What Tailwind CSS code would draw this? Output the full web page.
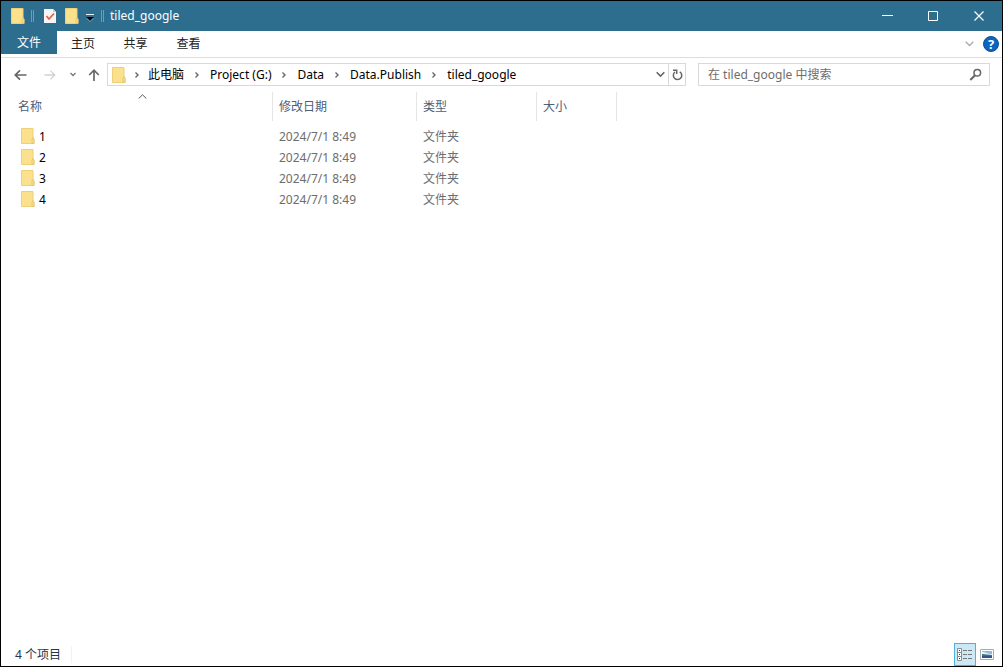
<!DOCTYPE html>
<html lang="zh-CN">
<head>
<meta charset="utf-8">
<title>tiled_google</title>
<script src="https://cdn.jsdelivr.net/npm/@tailwindcss/browser@4"></script>
</head>
<body class="flex h-screen flex-col overflow-hidden border border-black bg-white font-['Noto_Sans','Noto_Sans_CJK_SC',sans-serif] text-[12px] leading-4 text-black">
<svg class="hidden" aria-hidden="true">
  <symbol id="folder" viewBox="0 0 14 16">
    <path d="M.5.5h11.500v10l1 1v4H.5z" fill="#fce18c" stroke="#ecd07a"/>
    <path d="M11 15.500v-4.500l1-1.500 1 1.500v4.500z" fill="#fbe396" stroke="#dfc064" stroke-width=".8"/>
  </symbol>
  <symbol id="crumb" viewBox="0 0 6 8"><path d="M1.500 1.500L4 4 1.500 6.500" fill="none" stroke="#666" stroke-width="1.400"/></symbol>
</svg>

<header class="flex h-[30px] shrink-0 items-center bg-[#2d6e8f] text-white">
  <svg class="ml-[10px] h-4 w-[14px]"><use href="#folder"/></svg>
  <span class="ml-[6px] h-3 w-[3px] border-x border-[#6d9cb3]"></span>
  <button aria-label="属性" class="ml-[10px]">
    <svg class="h-4 w-3" viewBox="0 0 12 16"><path d="M0 1h9l3 3v11H0z" fill="#f7f5f5"/><path d="M9 1v3h3" fill="#c5ced3"/><path d="M2.500 8l2.500 3 5-5.500" fill="none" stroke="#e0673e" stroke-width="1.800"/></svg>
  </button>
  <button aria-label="新建文件夹" class="ml-[9px]"><svg class="h-4 w-[14px]"><use href="#folder"/></svg></button>
  <button aria-label="自定义快速访问工具栏" class="ml-[7px]">
    <svg class="mt-1 h-2 w-2" viewBox="0 0 8 8"><path d="M0 .5h8" stroke="#e7f0f4"/><path d="M0 3h8L4 7z" fill="#000"/><path d="M.5 4L4 7.500 7.500 4" fill="none" stroke="#b9d0db" stroke-width=".6"/></svg>
  </button>
  <span class="ml-[7px] h-3 w-[3px] border-x border-[#6d9cb3]"></span>
  <h1 class="ml-[6px] flex-1">tiled_google</h1>
  <button aria-label="最小化" class="grid h-full w-[46px] place-items-center"><svg class="h-[11px] w-[11px]" viewBox="0 0 11 11"><path d="M0 4.500h11" stroke="#fff"/></svg></button>
  <button aria-label="最大化" class="grid h-full w-[46px] place-items-center"><svg class="h-[10px] w-[10px]" viewBox="0 0 10 10"><path d="M.5.5h9v9h-9z" fill="none" stroke="#fff"/></svg></button>
  <button aria-label="关闭" class="grid h-full w-[46px] place-items-center"><svg class="h-[10px] w-[10px]" viewBox="0 0 10 10"><path d="M.5.5l9 9m0-9l-9 9" stroke="#fff" stroke-width="1.200"/></svg></button>
</header>

<nav class="flex h-[27px] shrink-0 items-start border-b border-[#dadfe2] text-[#222]">
  <button class="h-[23px] w-14 bg-[#2d6e8f] pt-px text-white">文件</button>
  <button class="h-[25px] w-[52px]">主页</button>
  <button class="h-[25px] w-[53px]">共享</button>
  <button class="h-[25px] w-[53px]">查看</button>
  <span class="flex-1"></span>
  <button aria-label="展开功能区" class="grid h-[26px] w-5 place-items-center"><svg class="h-[6px] w-[9px]" viewBox="0 0 9 6"><path d="M.7.700L4.500 4.500 8.300.7" fill="none" stroke="#aaa" stroke-width="1.300"/></svg></button>
  <button aria-label="帮助" class="mt-[5px] mr-[3px] ml-1 h-4 w-4 rounded-full border border-[#0a5299] bg-[#0b64bd] text-[13px] leading-[14px] font-bold text-white">?</button>
</nav>

<div class="mb-px flex h-[33px] shrink-0 items-center">
  <button aria-label="后退" class="ml-[13px]"><svg class="h-[12px] w-[13px]" viewBox="0 0 13 12"><path d="M12.500 6H1.500M6 1.300L1.300 6 6 10.700" fill="none" stroke="#666" stroke-width="1.700"/></svg></button>
  <button aria-label="前进" class="ml-[17px]" disabled><svg class="h-[12px] w-[12px]" viewBox="0 0 13 12"><path d="M.5 6h11M7 1.300L11.700 6 7 10.700" fill="none" stroke="#d2d2d2" stroke-width="1.400"/></svg></button>
  <button aria-label="最近浏览的位置" class="ml-[14px]"><svg class="h-[5px] w-[6px]" viewBox="0 0 6 5"><path d="M.5 1L3 3.500 5.500 1" fill="none" stroke="#777" stroke-width="1.300"/></svg></button>
  <button aria-label="向上" class="ml-[12px]"><svg class="h-[12px] w-[12px]" viewBox="0 0 12 12"><path d="M6 12V1.500M1.200 6L6 1.200 10.800 6" fill="none" stroke="#666" stroke-width="1.700"/></svg></button>
  <div class="ml-[7px] flex h-[23px] flex-1 items-center border border-[#d9d9d9]">
    <svg class="ml-1 h-4 w-[14px]"><use href="#folder"/></svg>
    <svg class="mx-2 h-2 w-[6px]"><use href="#crumb"/></svg>
    <a href="#" class="whitespace-nowrap">此电脑</a>
    <svg class="mx-[10px] h-2 w-[6px]"><use href="#crumb"/></svg>
    <a href="#" class="whitespace-nowrap">Project (G:)</a>
    <svg class="mx-[10px] h-2 w-[6px]"><use href="#crumb"/></svg>
    <a href="#">Data</a>
    <svg class="mx-[10px] h-2 w-[6px]"><use href="#crumb"/></svg>
    <a href="#">Data.Publish</a>
    <svg class="mx-[10px] h-2 w-[6px]"><use href="#crumb"/></svg>
    <a href="#">tiled_google</a>
    <span class="flex-1"></span>
    <button aria-label="以前的位置" class="grid h-full w-4 place-items-center"><svg class="h-[7px] w-[9px]" viewBox="0 0 9 7"><path d="M.7 1.200L4.500 5 8.300 1.200" fill="none" stroke="#666" stroke-width="1.600"/></svg></button>
    <button aria-label="刷新" class="grid h-full w-[17px] place-items-center border-l border-[#d9d9d9]"><svg class="h-[12px] w-[11px]" viewBox="0 0 11 12"><path d="M7.800 2.800A4.200 4.200 0 1 1 3 3M1 1.200h3.700V5" fill="none" stroke="#666" stroke-width="1.500"/></svg></button>
  </div>
  <div class="mr-3 ml-3 flex h-[23px] w-[292px] shrink-0 items-center border border-[#d9d9d9] pr-[7px] pl-[9px]">
    <input type="text" aria-label="搜索" placeholder="在 tiled_google 中搜索" class="min-w-0 flex-1 outline-none placeholder:text-[#6d6d6d]">
    <svg class="h-[13px] w-[13px]" viewBox="0 0 13 13"><circle cx="8.300" cy="4.700" r="3.300" fill="none" stroke="#666" stroke-width="1.500"/><path d="M6 7.200L1.300 12" stroke="#666" stroke-width="2"/></svg>
  </div>
</div>

<main class="flex-1">
  <table class="w-full table-fixed border-separate border-spacing-0 text-left">
    <colgroup><col class="w-[272px]"><col class="w-36"><col class="w-30"><col class="w-20"><col></colgroup>
    <thead class="text-[#4c607a]">
      <tr class="h-[29px]">
        <th class="relative border-r border-[#e5e5e5] p-0 pl-[17px] font-normal">名称<svg class="absolute top-[2px] left-[137px] h-[5px] w-[9px]" viewBox="0 0 9 5"><path d="M.7 4.500L4.500.8l3.800 3.700" fill="none" stroke="#555"/></svg></th>
        <th class="border-r border-[#e5e5e5] p-0 pl-[6px] font-normal">修改日期</th>
        <th class="border-r border-[#e5e5e5] p-0 pl-[6px] font-normal">类型</th>
        <th class="border-r border-[#e5e5e5] p-0 pl-[6px] font-normal">大小</th>
        <td></td>
      </tr>
      <tr class="h-[5px]"><td colspan="5" class="p-0"></td></tr>
    </thead>
    <tbody class="text-[#6d6d6d]">
      <tr class="h-[21px]"><td class="p-0 pl-5"><a href="#" class="flex items-center gap-1 text-black"><svg class="mb-px h-4 w-[14px]"><use href="#folder"/></svg>1</a></td><td class="p-0 pl-[6px]">2024/7/1 8:49</td><td class="p-0 pl-[6px]">文件夹</td><td></td><td></td></tr>
      <tr class="h-[21px]"><td class="p-0 pl-5"><a href="#" class="flex items-center gap-1 text-black"><svg class="mb-px h-4 w-[14px]"><use href="#folder"/></svg>2</a></td><td class="p-0 pl-[6px]">2024/7/1 8:49</td><td class="p-0 pl-[6px]">文件夹</td><td></td><td></td></tr>
      <tr class="h-[21px]"><td class="p-0 pl-5"><a href="#" class="flex items-center gap-1 text-black"><svg class="mb-px h-4 w-[14px]"><use href="#folder"/></svg>3</a></td><td class="p-0 pl-[6px]">2024/7/1 8:49</td><td class="p-0 pl-[6px]">文件夹</td><td></td><td></td></tr>
      <tr class="h-[21px]"><td class="p-0 pl-5"><a href="#" class="flex items-center gap-1 text-black"><svg class="mb-px h-4 w-[14px]"><use href="#folder"/></svg>4</a></td><td class="p-0 pl-[6px]">2024/7/1 8:49</td><td class="p-0 pl-[6px]">文件夹</td><td></td><td></td></tr>
    </tbody>
  </table>
</main>

<footer class="flex h-6 shrink-0 items-center pl-[14px] text-[#23354f]">
  <span class="border-r border-[#f2f2f2] pt-px pr-[10px]">4 个项目</span>
  <span class="flex-1"></span>
  <button aria-label="详细信息" aria-pressed="true" class="grid h-[23px] w-[22px] place-items-center border border-[#4fb3d9] bg-[#cbe8f6]">
    <svg class="h-[13px] w-4" viewBox="0 0 16 13"><path d="M.5.5h4v12h-4zM.5 4.500h4M.5 8.500h4" fill="#fff" stroke="#8c8c8c"/><path d="M2 2.500h1M2 6.500h1M2 10.500h1" stroke="#333"/><path d="M6 2.500h4m1 0h4M6 6.500h4m1 0h4M6 10.500h4m1 0h4" stroke="#777"/></svg>
  </button>
  <button aria-label="大缩略图" class="mr-2 ml-1">
    <svg class="h-[11px] w-[14px]" viewBox="0 0 14 11"><path d="M.5.500h13v10H.5z" fill="#fff" stroke="#aaa"/><path d="M2 2h10v7H2z" fill="#8db9e2"/><path d="M2 3c4 0 5 2 10 2v1H2z" fill="#e8f2fa"/><path d="M2 5c4 0 6 1 10 1v1H2z" fill="#3f7180"/><path d="M2 7h10v2H2z" fill="#2f5684"/></svg>
  </button>
</footer>
</body>
</html>
